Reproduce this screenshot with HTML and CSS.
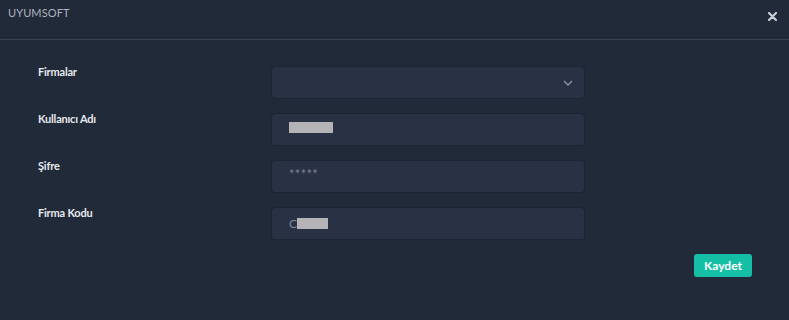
FILE: index.html
```html
<!DOCTYPE html>
<html lang="tr">
<head>
    <meta charset="UTF-8">
    <meta name="viewport" content="width=device-width, initial-scale=1.0">
    <title>Uyumsoft</title>
    <link rel="stylesheet" href="styles.css">
</head>
<body>
    <div class="modal">
        <div class="modal-header">
            <span class="modal-title">UYUMSOFT</span>
            <button class="close-btn" aria-label="Kapat">
                <svg width="9" height="9" viewBox="0 0 9 9">
                    <path d="M1 1 L8 8 M8 1 L1 8" stroke="#c9cdd4" stroke-width="2.2" stroke-linecap="round"/>
                </svg>
            </button>
        </div>
        <div class="modal-body">
            <div class="form-row">
                <label class="form-label">Firmalar</label>
                <div class="field field-select">
                    <svg class="chevron" width="10" height="6" viewBox="0 0 10 6">
                        <path d="M1 1 L5 5 L9 1" fill="none" stroke="#8e96a8" stroke-width="1.3"/>
                    </svg>
                </div>
            </div>
            <div class="form-row">
                <label class="form-label">Kullanıcı Adı</label>
                <div class="field">
                    <span class="masked masked-user"></span>
                </div>
            </div>
            <div class="form-row">
                <label class="form-label">Şifre</label>
                <div class="field">
                    <span class="password">*****</span>
                </div>
            </div>
            <div class="form-row">
                <label class="form-label">Firma Kodu</label>
                <div class="field">
                    <span class="field-text">C</span><span class="masked masked-code"></span>
                </div>
            </div>
            <div class="button-container">
                <button class="save-btn">Kaydet</button>
            </div>
        </div>
    </div>
</body>
</html>
```

FILE: styles.css
```css
body {
    margin: 0;
    background-color: #212a39;
    font-family: Lato, "Noto Sans", sans-serif;
}

.modal {
    width: 789px;
    height: 320px;
}

.modal-header {
    display: flex;
    justify-content: space-between;
    align-items: flex-start;
    height: 39px;
    padding: 0 12px 0 8px;
    border-bottom: 1px solid #3a4354;
}

.modal-title {
    margin-top: 6px;
    font-size: 11px;
    line-height: 14px;
    color: #aeb3bd;
    letter-spacing: 0.1px;
}

.close-btn {
    margin-top: 12px;
    padding: 0;
    border: none;
    background: none;
    line-height: 0;
    cursor: pointer;
}

.modal-body {
    padding: 26px 0 0 38px;
}

.form-row {
    display: flex;
    align-items: flex-start;
    margin-bottom: 14px;
}

.form-label {
    width: 233px;
    font-size: 11px;
    font-weight: bold;
    line-height: 12px;
    color: #e7e9ed;
    letter-spacing: -0.2px;
}

.field {
    display: flex;
    align-items: center;
    box-sizing: border-box;
    width: 314px;
    height: 33px;
    padding: 0 17px;
    background-color: #293145;
    border: 1px solid #1d2431;
    border-radius: 4px;
}

.field-select {
    justify-content: flex-end;
    padding-right: 11px;
}

.masked {
    display: inline-block;
    height: 11px;
    background-color: #b4b4b7;
}

.masked-user {
    width: 44px;
    margin-top: -4px;
}

.masked-code {
    width: 31px;
}

.field-text {
    font-size: 12px;
    color: #7f889a;
}

.password {
    font-size: 13px;
    color: #7b8394;
    letter-spacing: 0.3px;
    margin-top: -5px;
}

.button-container {
    display: flex;
    justify-content: flex-end;
    width: 714px;
    margin-top: 5px;
}

.save-btn {
    width: 58px;
    height: 23px;
    padding: 0;
    border: none;
    border-radius: 3px;
    background-color: #15bfa5;
    color: #ffffff;
    font-family: Lato, "Noto Sans", sans-serif;
    font-size: 12px;
    font-weight: bold;
    cursor: pointer;
}
```
